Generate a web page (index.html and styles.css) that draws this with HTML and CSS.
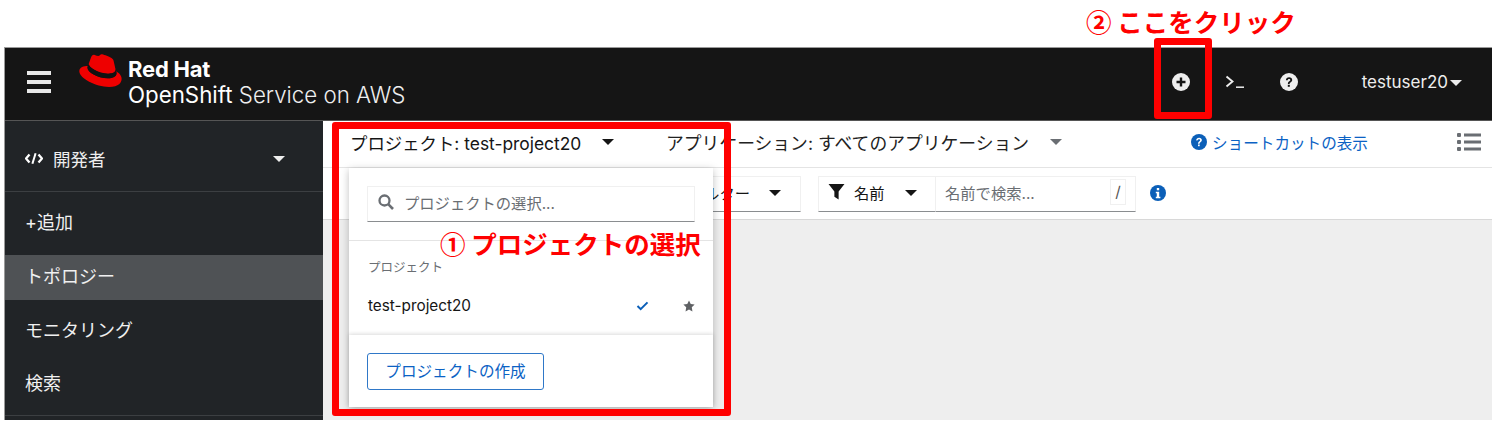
FILE: index.html
```html
<!DOCTYPE html>
<html lang="ja">
<head>
<meta charset="utf-8">
<title>OpenShift</title>
<link rel="stylesheet" href="styles.css">
</head>
<body>
<div class="app">
  <header class="mast">
    <button class="burger" aria-label="menu"><i></i><i></i><i></i></button>
    <div class="brand">
      <svg class="hat" viewBox="0 0 44 34" width="44" height="34">
        <path fill="#e00" d="M29.5 19.5c2.9 0 7 -.6 7 -4 0-.3 0-.5-.1-.8l-1.7-7.5C34.300 5.500 34 4.800 31.100 3.300 28.900 2.200 24 .3 22.500.3c-1.400 0-1.800 1.800-3.400 1.800-1.600 0-2.700-1.300-4.200-1.300-1.400 0-2.300 1-3 2.900 0 0-2 5.600-2.200 6.400 0 .1 0 .3 0 .4 0 2.200 8.500 9.400 19.800 9.400z"/>
        <path fill="#e00" d="M37.100 16.800c.4 1.900.4 2.100.4 2.400 0 3.300-3.700 5.100-8.500 5.100-10.900 0-20.500-6.400-20.500-10.600 0-.6.100-1.200.4-1.700C4.900 12.200.3 12.900.300 17.300c0 7 16.600 15.600 29.700 15.600 10.100 0 12.600-4.600 12.600-8.200 0-2.800-2.400-6-6.500-7.900z"/>
        <path fill="#111" d="M37.100 16.800c.4 1.900.4 2.100.4 2.400 0 3.300-3.700 5.100-8.500 5.100-10.900 0-20.500-6.400-20.500-10.600 0-.6.100-1.200.4-1.700l.9-2.100c0 .1 0 .3 0 .4 0 2.200 8.500 9.400 19.800 9.400 2.900 0 7-.6 7-4 0-.3 0-.5-.1-.8z"/>
      </svg>
      <div class="brand-text">
        <div class="brand-top">Red Hat</div>
        <div class="brand-bottom"><span>OpenShift</span> Service on AWS</div>
      </div>
    </div>
    <div class="mast-tools">
      <button class="tool" aria-label="add">
        <svg viewBox="0 0 18 18" width="18" height="18"><circle cx="9" cy="9" r="9" fill="#eee"/><path d="M9 4.500v9M4.500 9h9" stroke="#151515" stroke-width="2.400"/></svg>
      </button>
      <button class="tool" aria-label="terminal">
        <svg viewBox="0 0 20 14" width="20" height="14"><path d="M1.500 1.500 7.500 6.500 1.500 11.500" fill="none" stroke="#eee" stroke-width="1.900"/><path d="M11 12.200h8" stroke="#eee" stroke-width="1.500"/></svg>
      </button>
      <button class="tool" aria-label="help">
        <svg viewBox="0 0 18 18" width="18" height="18"><circle cx="9" cy="9" r="9" fill="#eee"/><path d="M5.900 7.200C5.900 5.300 7.300 4.200 9.100 4.200c1.800 0 3.100 1.100 3.100 2.700 0 2.300-2.600 2.300-2.600 4.100H7.900c0-2.800 2.400-2.800 2.400-4 0-.6-.5-1.100-1.200-1.100-.8 0-1.300.5-1.400 1.300z" fill="#151515"/><rect x="7.800" y="11.800" width="2" height="2" fill="#151515"/></svg>
      </button>
      <div class="user">testuser20<span class="caret caret-light"></span></div>
    </div>
  </header>
  <div class="main">
    <nav class="side">
      <div class="persp">
        <svg viewBox="0 0 18 12" width="18" height="13"><path d="M4.500 2 1 6l3.500 4M13.500 2 17 6l-3.500 4" fill="none" stroke="#fff" stroke-width="2.300"/><path d="M10.600 .8 7.400 11.200" stroke="#fff" stroke-width="2"/></svg>
        <span class="persp-label">開発者</span>
        <span class="caret caret-light persp-caret"></span>
      </div>
      <a class="nav-item nav-first">+追加</a>
      <a class="nav-item nav-active">トポロジー</a>
      <a class="nav-item nav-mon">モニタリング</a>
      <a class="nav-item nav-last">検索</a>
    </nav>
    <section class="content">
      <div class="bar1">
        <div class="proj-sel">プロジェクト: test-project20<span class="caret caret-dark proj-caret"></span></div>
        <div class="app-sel">アプリケーション: すべてのアプリケーション<span class="caret caret-grey app-caret"></span></div>
        <div class="shortcut">
          <svg viewBox="0 0 16 16" width="16" height="16"><circle cx="8" cy="8" r="8" fill="#0b5fb8"/><path d="M5.200 6.400C5.200 4.700 6.400 3.700 8.100 3.700c1.600 0 2.800 1 2.800 2.400 0 2-2.300 2-2.300 3.700H7c0-2.500 2.100-2.500 2.100-3.600 0-.5-.4-1-1.100-1-.7 0-1.100.4-1.200 1.100z" fill="#fff"/><rect x="7" y="10.500" width="1.700" height="1.700" fill="#fff"/></svg>
          ショートカットの表示
        </div>
        <svg class="listicon" viewBox="0 0 24 18" width="24" height="18"><g fill="#6a6e73"><rect x="0" y="0" width="4" height="4" rx="1"/><rect x="7" y="0.500" width="17" height="3"/><rect x="0" y="7" width="4" height="4" rx="1"/><rect x="7" y="7.500" width="17" height="3"/><rect x="0" y="14" width="4" height="4" rx="1"/><rect x="7" y="14.500" width="17" height="3"/></g></svg>
      </div>
      <div class="bar2">
        <div class="filter-a">フィルター<span class="caret caret-dark filter-caret"></span></div>
        <div class="filter-b">
          <svg viewBox="0 0 16 16" width="17" height="17"><path d="M.5 1h15L10 8v7.500L6 13V8z" fill="#151515"/></svg>
          <span class="fname">名前</span><span class="caret caret-dark fname-caret"></span>
        </div>
        <div class="search">
          <span>名前で検索...</span>
          <kbd class="slash">/</kbd>
        </div>
        <svg class="info" viewBox="0 0 16 16" width="16" height="16"><circle cx="8" cy="8" r="8" fill="#0b5fb8"/><rect x="6.800" y="3" width="2.400" height="2.300" fill="#fff"/><path d="M5.800 6.700h3.400v5h1.200v1.500H5.800v-1.500h1v-3.500h-1z" fill="#fff"/></svg>
      </div>
      <div class="canvas"></div>
      <div class="popup">
        <div class="pop-search">
          <div class="pop-input">
            <svg viewBox="0 0 16 16" width="16" height="16"><circle cx="6.500" cy="6.500" r="5" fill="none" stroke="#6a6e73" stroke-width="2.300"/><path d="m10.200 10.200 4.800 4.800" stroke="#6a6e73" stroke-width="2.600"/></svg>
            <span>プロジェクトの選択...</span>
          </div>
        </div>
        <div class="pop-list">
          <div class="pop-head">プロジェクト</div>
          <div class="pop-row">
            <span class="pop-name">test-project20</span>
            <svg class="pop-check" viewBox="0 0 14 11" width="13" height="10"><path d="M1.500 5.500 5 9l7.500-7.500" fill="none" stroke="#0b5fb8" stroke-width="2.200"/></svg>
            <svg class="pop-star" viewBox="0 0 16 16" width="12" height="12"><path d="M8 .5l2.300 4.900 5.200.7-3.800 3.700.9 5.400L8 12.700l-4.600 2.500.9-5.400L.5 6.100l5.200-.7z" fill="#5f6164"/></svg>
          </div>
        </div>
        <div class="pop-foot"><button class="create">プロジェクトの作成</button></div>
      </div>
    </section>
  </div>
</div>
<div class="mark mark-proj"></div>
<div class="mark mark-add"></div>
<div class="note note-1">① プロジェクトの選択</div>
<div class="note note-2">② ここをクリック</div>
</body>
</html>
```

FILE: styles.css
```css
* { box-sizing: border-box; }
html, body { margin: 0; padding: 0; background: #fff; }
body {
  width: 1498px; height: 430px; overflow: hidden; position: relative;
  font-family: "Inter", "Noto Sans CJK JP", sans-serif;
  color: #151515;
}
button { font: inherit; background: none; border: 0; padding: 0; }
.app {
  margin: 47px 0 0 4px; width: 1488px; height: 373px;
  display: flex; flex-direction: column; overflow: hidden;
  border-left: 1px solid #9a9a9a; border-top: 1px solid #9a9a9a;
}
.mast {
  height: 73px; flex: none; background: #151515; color: #eee;
  display: flex; align-items: center; border-bottom: 1px solid #555; padding-bottom: 5px;
}
.burger { width: 24px; margin-left: 22px; display: flex; flex-direction: column; gap: 5px; }
.burger i { display: block; height: 4px; background: #e8e8e8; }
.brand { display: flex; margin-left: 28px; margin-top: 0; }
.hat { flex: none; margin-top: -1px; }
.brand-text { margin-left: 5px; color: #fff; margin-top: 2px; }
.brand-top { font: 700 22px/25px "Inter", sans-serif; letter-spacing: -.2px; }
.brand-bottom { font: 300 22.300px/26px "Inter", sans-serif; color: #eee; white-space: nowrap; }
.brand-bottom span { font-weight: 400; color: #fff; }
.mast-tools { margin-left: auto; display: flex; align-items: center; padding-right: 30px; height: 100%; }
.tool { width: 54px; height: 22px; display: flex; align-items: center; justify-content: center; }
.user { margin-left: 46px; font-size: 17px; color: #eee; display: flex; align-items: center; white-space: nowrap; }
.caret { display: inline-block; width: 0; height: 0; border-left: 6px solid transparent; border-right: 6px solid transparent; border-top: 6px solid #151515; }
.caret-light { border-top-color: #eee; }
.caret-dark { border-top-color: #151515; }
.caret-grey { border-top-color: #6a6e73; }
.user .caret { margin-left: 2px; margin-top: 2px; }
.main { flex: 1; display: flex; min-height: 0; }
.side { width: 318px; flex: none; background: #212427; color: #eee; display: flex; flex-direction: column; }
.persp { height: 71px; flex: none; display: flex; align-items: center; padding: 5px 38px 0 20px; border-bottom: 1px solid #3c3f42; font-size: 17.500px; }
.persp-label { margin-left: 10px; }
.persp-caret { margin-left: auto; margin-top: 1px; }
.nav-item { height: 54px; flex: none; display: flex; align-items: center; padding-left: 20px; font-size: 18px; color: #f0f0f0; }
.nav-first { height: 63px; padding-bottom: 5px; }
.nav-active { height: 45px; background: #4f5255; padding-bottom: 6px; }
.nav-mon { padding-top: 3px; }
.nav-last { height: 62px; padding-bottom: 6px; border-bottom: 1px solid #3c3f42; }
.content { flex: 1; position: relative; display: flex; flex-direction: column; min-width: 0; }
.bar1 { height: 47px; flex: none; display: flex; align-items: center; border-bottom: 1px solid #e4e4e4; background: #fff; white-space: nowrap; padding-bottom: 4px; }
.proj-sel { margin-left: 27px; width: 316px; display: flex; align-items: center; font-size: 17.400px; }
.proj-caret { margin-left: 21px; }
.app-sel { display: flex; align-items: center; width: 525px; color: #222; font-size: 17.800px; }
.app-caret { margin-left: 21px; }
.shortcut { display: flex; align-items: center; gap: 5px; color: #0b62c4; font-size: 15.600px; }
.listicon { margin-left: auto; margin-right: 11px; }
.bar2 { height: 52px; flex: none; display: flex; align-items: flex-start; padding-top: 8px; background: #fff; border-bottom: 1px solid #d8d8d8; font-size: 15.300px; white-space: nowrap; }
.filter-a { margin-left: 255px; width: 223px; height: 36px; display: flex; align-items: center; justify-content: flex-end; padding: 0 19px 5px 0; border: 1px solid #f0f0f0; border-bottom: 1px solid #8a8d90; }
.filter-caret { margin-left: 19px; margin-top: 3px; }
.filter-b { margin-left: 17px; width: 118px; height: 36px; display: flex; align-items: center; padding: 0 0 5px 9px; border: 1px solid #f0f0f0; border-bottom: 1px solid #8a8d90; }
.fname { margin-left: 9px; }
.fname-caret { margin-left: 20px; margin-top: 3px; }
.search { width: 200px; height: 36px; display: flex; align-items: center; justify-content: space-between; padding: 0 9px 5px 9px; border: 1px solid #f0f0f0; border-left: 0; border-bottom: 1px solid #8a8d90; color: #6a6e73; }
.slash { font: inherit; color: #555; width: 16px; height: 26px; border: 1px solid #f0f0f0; display: flex; align-items: center; justify-content: center; }
.info { margin: 9px 0 0 14px; }
.canvas { flex: 1; background: #eee; }
.popup { position: absolute; left: 26px; top: 47px; width: 364px; height: 239px; background: #fff; box-shadow: 0 2px 8px rgba(0,0,0,.25); display: flex; flex-direction: column; }
.pop-search { height: 73px; flex: none; padding: 18px 18px 0; border-bottom: 1px solid #e4e4e4; }
.pop-input { height: 36px; display: flex; align-items: center; padding: 0 0 4px 10px; gap: 10px; border: 1px solid #f0f0f0; border-bottom: 1px solid #8a8d90; color: #6a6e73; font-size: 15.300px; }
.pop-list { height: 94px; flex: none; padding: 0 18px; }
.pop-head { margin-top: 16px; font-size: 12.500px; color: #6a6e73; padding-left: 1px; }
.pop-row { margin-top: 20px; display: flex; align-items: center; font-size: 15.300px; }
.pop-name { margin-left: 1px; }
.pop-check { margin-left: auto; }
.pop-star { margin-left: 34px; }
.pop-foot { flex: 1; padding-top: 18px; padding-left: 18px; box-shadow: 0 -1px 4px rgba(0,0,0,.15); }
.create { width: 177px; height: 37px; border: 1px solid #2f78c8; border-radius: 3px; color: #0b62c4; font-size: 15.600px; font-family: inherit; padding-bottom: 3px; }
.mark { position: absolute; border: 7px solid #f00; border-radius: 3px; }
.mark-proj { left: 332px; top: 122px; width: 399px; height: 294px; }
.mark-add { left: 1154px; top: 38px; width: 58px; height: 81px; }
.note { position: absolute; color: #f00; font-weight: 700; font-size: 25.500px; line-height: 30px; white-space: nowrap; font-family: "Noto Sans CJK JP", sans-serif; }
.note-1 { left: 440px; top: 228px; }
.note-2 { left: 1086px; top: 6px; }
```
